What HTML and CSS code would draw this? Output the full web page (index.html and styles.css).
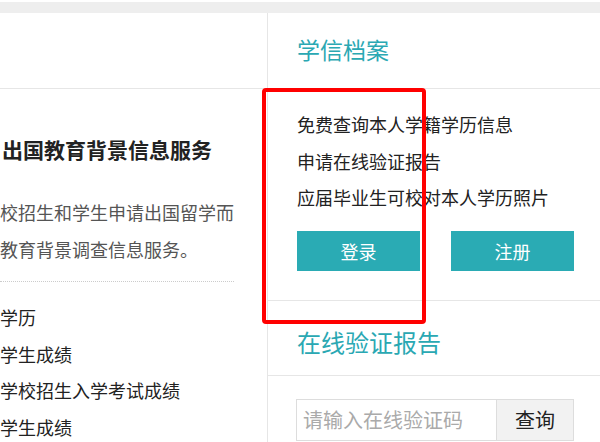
FILE: index.html
```html
<!DOCTYPE html>
<html lang="zh-CN">
<head>
  <meta charset="UTF-8" />
  <title>学信档案</title>
  <link rel="stylesheet" href="styles.css">
</head>
<body>

  <div class="topbar"></div>

  <div class="page">
    <div class="left">
      <div class="left-head"></div>
      <h2 class="service-title">出国教育背景信息服务</h2>
      <p class="service-desc">校招生和学生申请出国留学而<br>教育背景调查信息服务。</p>
      <ul class="service-list">
        <li>学历</li>
        <li>学生成绩</li>
        <li>学校招生入学考试成绩</li>
        <li>学生成绩</li>
      </ul>
    </div>

    <div class="right">
      <div class="box-head">
        <h3 class="box-title">学信档案</h3>
      </div>
      <div class="box-body">
        <ul class="feature-list">
          <li>免费查询本人学籍学历信息</li>
          <li>申请在线验证报告</li>
          <li>应届毕业生可校对本人学历照片</li>
        </ul>
        <div class="actions">
          <a class="btn" href="#">登录</a>
          <a class="btn" href="#">注册</a>
        </div>
      </div>

      <div class="box-head report-head">
        <h3 class="box-title big">在线验证报告</h3>
      </div>
      <form class="search" onsubmit="return false">
        <input type="text" class="search-input" placeholder="请输入在线验证码" />
        <button class="search-btn">查询</button>
      </form>
    </div>

    <div class="mark"></div>
  </div>

</body>
</html>
```

FILE: styles.css
```css
* {
  margin: 0;
  padding: 0;
  box-sizing: border-box;
  font-family: "Noto Sans CJK SC", "Noto Sans", sans-serif;
}

body {
  background-color: #fff;
  width: 600px;
  height: 442px;
  overflow: hidden;
  color: #333;
}

ul {
  list-style: none;
}

.topbar {
  height: 11px;
  margin-top: 2px;
  background-color: #eee;
}

.page {
  position: relative;
  display: grid;
  grid-template-columns: 266px 1fr;
  height: 429px;
  overflow: hidden;
}

/* left column */
.left {
  overflow: hidden;
}

.left-head {
  height: 76px;
  border-bottom: 1px solid #e6e6e6;
}

.service-title {
  margin: 45px 0 0 2px;
  font-size: 21px;
  line-height: 30px;
  font-weight: bold;
  color: #222;
}

.service-desc {
  margin-top: 30px;
  width: 234px;
  padding-bottom: 13px;
  border-bottom: 1px dotted #ccc;
  font-size: 18px;
  line-height: 37px;
  color: #555;
  white-space: nowrap;
}

.service-list {
  margin-top: 17px;
  font-size: 18px;
  line-height: 36.7px;
  color: #222;
}

/* right column */
.right {
  border-left: 1px solid #e6e6e6;
  margin-left: 1px;
}

.box-head {
  height: 76px;
  padding: 0 0 4px 29px;
  display: flex;
  align-items: center;
  border-bottom: 1px solid #e6e6e6;
}

.box-title {
  font-size: 23px;
  font-weight: normal;
  color: #2aa8b3;
}

.box-title.big {
  font-size: 24px;
}

.box-body {
  padding: 17px 0 29px 29px;
  border-bottom: 1px solid #e6e6e6;
}

.feature-list {
  font-size: 18px;
  line-height: 36.5px;
  color: #222;
}

.actions {
  display: flex;
  gap: 31px;
  margin-top: 15px;
}

.btn {
  display: block;
  width: 123px;
  height: 40px;
  line-height: 40px;
  text-align: center;
  background-color: #2aabb4;
  color: #fff;
  font-size: 18px;
  text-decoration: none;
}

.report-head {
  height: 75px;
  padding: 8px 0 0 29px;
}

.search {
  display: flex;
  margin: 23px 0 0 28px;
}

.search-input {
  width: 201px;
  height: 42px;
  border: 1px solid #ddd;
  padding-left: 6px;
  font-size: 20px;
  outline: none;
}

.search-input::placeholder {
  color: #aaa;
}

.search-btn {
  width: 77px;
  height: 42px;
  border: 1px solid #ddd;
  border-left: none;
  background-color: #f2f2f2;
  font-size: 20px;
  color: #222;
}

/* annotation box */
.mark {
  position: absolute;
  left: 262px;
  top: 75px;
  width: 164px;
  height: 236px;
  border: 4px solid #f00;
  border-radius: 4px;
}
```
